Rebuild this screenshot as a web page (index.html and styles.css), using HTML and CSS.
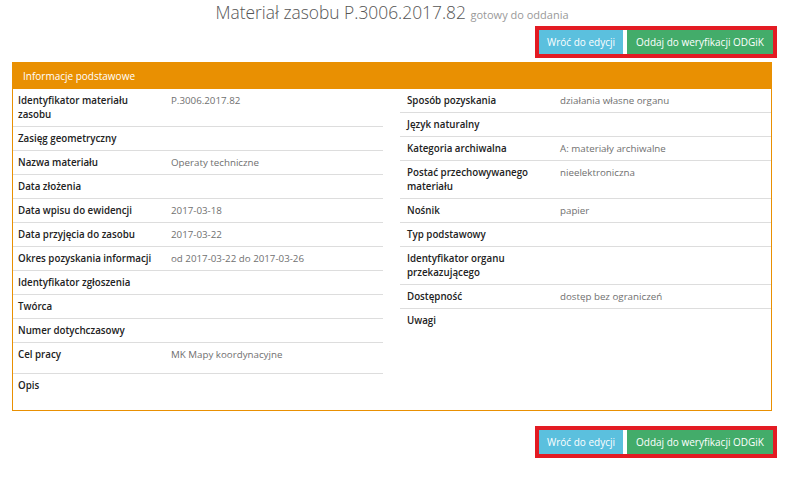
FILE: index.html
```html
<!DOCTYPE html>
<html lang="pl">
<head>
<meta charset="utf-8">
<title>Materiał zasobu</title>
<link rel="stylesheet" href="styles.css">
</head>
<body>
<div class="page">
  <h1 class="title">Materiał zasobu P.3006.2017.82 <small>gotowy do oddania</small></h1>
  <div class="actions">
    <div class="marked">
      <button class="btn btn-info">Wróć do edycji</button>
      <button class="btn btn-success">Oddaj do weryfikacji ODGiK</button>
    </div>
  </div>
  <section class="panel">
    <div class="panel-heading">Informacje podstawowe</div>
    <div class="panel-body">
      <div class="col col-left">
        <div class="row"><div class="label">Identyfikator materiału zasobu</div><div class="value">P.3006.2017.82</div></div>
        <div class="row"><div class="label">Zasięg geometryczny</div><div class="value"></div></div>
        <div class="row"><div class="label">Nazwa materiału</div><div class="value">Operaty techniczne</div></div>
        <div class="row"><div class="label">Data złożenia</div><div class="value"></div></div>
        <div class="row"><div class="label">Data wpisu do ewidencji</div><div class="value">2017-03-18</div></div>
        <div class="row"><div class="label">Data przyjęcia do zasobu</div><div class="value">2017-03-22</div></div>
        <div class="row"><div class="label">Okres pozyskania informacji</div><div class="value">od 2017-03-22 do 2017-03-26</div></div>
        <div class="row"><div class="label">Identyfikator zgłoszenia</div><div class="value"></div></div>
        <div class="row"><div class="label">Twórca</div><div class="value"></div></div>
        <div class="row"><div class="label">Numer dotychczasowy</div><div class="value"></div></div>
        <div class="row row-tall"><div class="label">Cel pracy</div><div class="value">MK Mapy koordynacyjne</div></div>
        <div class="row row-last"><div class="label">Opis</div><div class="value"></div></div>
      </div>
      <div class="col col-right">
        <div class="row"><div class="label">Sposób pozyskania</div><div class="value">działania własne organu</div></div>
        <div class="row"><div class="label">Język naturalny</div><div class="value"></div></div>
        <div class="row"><div class="label">Kategoria archiwalna</div><div class="value">A: materiały archiwalne</div></div>
        <div class="row"><div class="label">Postać przechowywanego materiału</div><div class="value">nieelektroniczna</div></div>
        <div class="row"><div class="label">Nośnik</div><div class="value">papier</div></div>
        <div class="row"><div class="label">Typ podstawowy</div><div class="value"></div></div>
        <div class="row"><div class="label">Identyfikator organu przekazującego</div><div class="value"></div></div>
        <div class="row"><div class="label">Dostępność</div><div class="value">dostęp bez ograniczeń</div></div>
        <div class="row row-last"><div class="label">Uwagi</div><div class="value"></div></div>
      </div>
    </div>
  </section>
  <div class="actions actions-bottom">
    <div class="marked">
      <button class="btn btn-info">Wróć do edycji</button>
      <button class="btn btn-success">Oddaj do weryfikacji ODGiK</button>
    </div>
  </div>
</div>
</body>
</html>
```

FILE: styles.css
```css
html, body {
  margin: 0;
  padding: 0;
  background: #ffffff;
}

body {
  font-family: "Open Sans", "DejaVu Sans", sans-serif;
  color: #222222;
}

.page {
  width: 760px;
  margin-left: 12px;
}

.title {
  margin: 0;
  height: 24px;
  font-size: 17.4px;
  font-weight: 300;
  line-height: 24px;
  color: #555555;
  text-align: center;
}

.title small {
  font-size: 11px;
  font-weight: 400;
  line-height: 0;
  color: #999999;
}

.actions {
  display: flex;
  justify-content: flex-end;
  margin-top: 2px;
  margin-right: -5px;
}

.actions-bottom {
  margin-top: 15px;
}

.marked {
  display: flex;
  gap: 4px;
  border: 4px solid #e31b23;
  background: #ffffff;
}

.btn {
  margin: 0;
  border: 0;
  border-radius: 0;
  height: 24px;
  padding: 0 8px;
  font-family: "Open Sans", "DejaVu Sans", sans-serif;
  font-size: 10px;
  color: #ffffff;
  line-height: 24px;
}

.btn-info {
  background: #5bc0de;
  padding: 0 8px;
}

.btn-success {
  background: #43ac6a;
  padding: 0 9px;
}

.panel {
  margin-top: 4px;
  border: 1px solid #e99002;
}

.panel-heading {
  height: 26px;
  line-height: 26px;
  padding-left: 10px;
  background: #e99002;
  color: #ffffff;
  font-size: 10px;
}

.panel-body {
  display: grid;
  grid-template-columns: 370px 371px;
  column-gap: 17px;
  align-items: start;
  padding-bottom: 13px;
}

.row {
  display: grid;
  grid-template-columns: 138px 1fr;
  column-gap: 15px;
  padding: 5px 0 4px 5px;
  border-bottom: 1px solid #dddddd;
  font-size: 9.75px;
  line-height: 14px;
}

.col-right .row {
  padding-left: 7px;
}

.row-tall {
  padding-bottom: 11px;
}

.row-last {
  border-bottom: 0;
}

.label {
  font-weight: 600;
  color: #222222;
}

.value {
  color: #707070;
}
```
